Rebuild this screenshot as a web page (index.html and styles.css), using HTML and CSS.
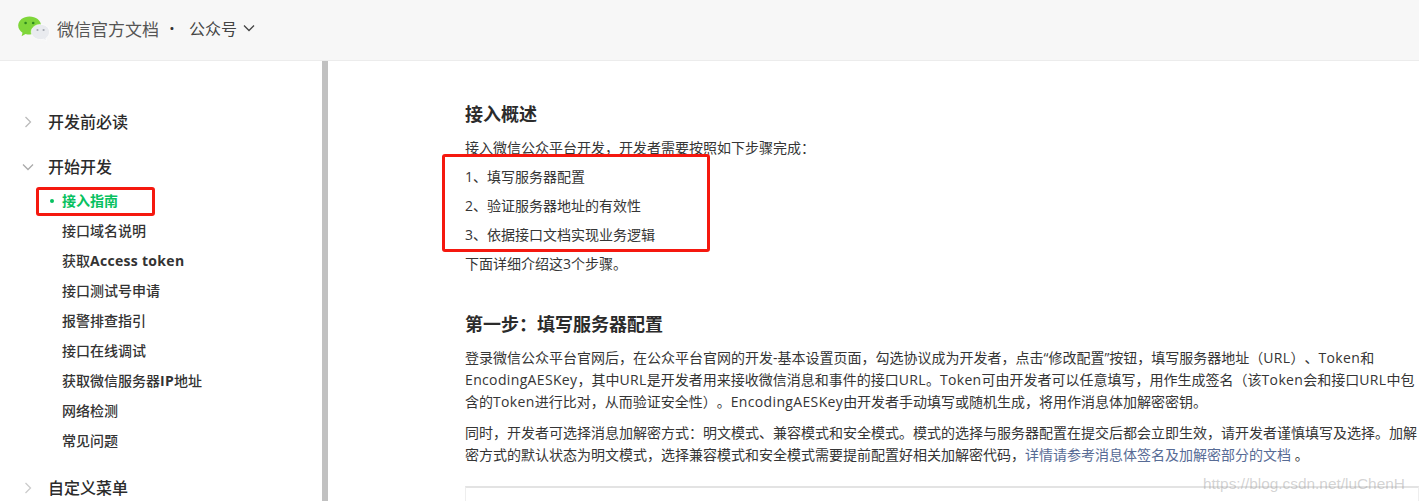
FILE: index.html
```
<!DOCTYPE html>
<html lang="zh-CN">
<head>
<meta charset="utf-8">
<title>微信官方文档</title>
<link rel="stylesheet" href="styles.css">
</head>
<body>
<header class="topbar">
  <svg class="logo" viewBox="0 0 32 26" width="32" height="26" aria-hidden="true">
    <path d="M11.500 0.500C5.200 0.500 0.200 4.400 0.200 9.600c0 3 1.700 5.500 4.300 7.200l-0.900 3.400 3.900-2.200c1.300 0.400 2.600 0.600 4 0.600 6.300 0 11.600-4 11.600-9C23.100 4.400 17.800 0.500 11.500 0.500z" fill="#7fd63a"/>
    <circle cx="7.600" cy="7" r="1.300" fill="#2f8a1f"/>
    <circle cx="15.200" cy="7" r="1.300" fill="#2f8a1f"/>
    <path d="M22.600 8.400c-5.100 0-9.400 3.300-9.400 7.600 0 4.200 4.300 7.600 9.400 7.600 1 0 2-0.100 2.900-0.400l3 1.700-0.700-2.500c2.200-1.400 3.700-3.800 3.700-6.400 0-4.300-3.800-7.600-8.900-7.600z" fill="#e9ebef" stroke="#fff" stroke-width="0.600"/>
    <circle cx="19.500" cy="14" r="1.100" fill="#a3a8b0"/>
    <circle cx="25.600" cy="14" r="1.100" fill="#a3a8b0"/>
  </svg>
  <span class="brand">微信官方文档</span>
  <span class="sep">·</span>
  <span class="product">公众号</span>
  <svg class="caret" viewBox="0 0 12 8" width="12" height="8" aria-hidden="true"><path d="M1 1.500l5 5 5-5" fill="none" stroke="#444" stroke-width="1.300"/></svg>
</header>
<div class="layout">
  <nav class="sidebar">
    <div class="group">
      <div class="group-title"><svg class="chev" viewBox="0 0 8 12" width="8" height="12" aria-hidden="true"><path d="M1.500 1l5 5-5 5" fill="none" stroke="#bbb" stroke-width="1.300"/></svg>开发前必读</div>
    </div>
    <div class="group open">
      <div class="group-title"><svg class="chev down" viewBox="0 0 12 8" width="12" height="8" aria-hidden="true"><path d="M1 1.500l5 5 5-5" fill="none" stroke="#aaa" stroke-width="1.300"/></svg>开始开发</div>
      <ul class="items">
        <li class="active">接入指南</li>
        <li>接口域名说明</li>
        <li>获取<span class="en">Access token</span></li>
        <li>接口测试号申请</li>
        <li>报警排查指引</li>
        <li>接口在线调试</li>
        <li>获取微信服务器<span class="en">IP</span>地址</li>
        <li>网络检测</li>
        <li>常见问题</li>
      </ul>
    </div>
    <div class="group">
      <div class="group-title"><svg class="chev" viewBox="0 0 8 12" width="8" height="12" aria-hidden="true"><path d="M1.500 1l5 5-5 5" fill="none" stroke="#ccc" stroke-width="1.300"/></svg>自定义菜单</div>
    </div>
  </nav>
  <div class="scrollbar"></div>
  <main class="content">
    <h2 class="first">接入概述</h2>
    <p>接入微信公众平台开发，开发者需要按照如下步骤完成：</p>
    <p>1、填写服务器配置</p>
    <p>2、验证服务器地址的有效性</p>
    <p>3、依据接口文档实现业务逻辑</p>
    <p>下面详细介绍这3个步骤。</p>
    <h2 class="step">第一步：填写服务器配置</h2>
    <p class="body">登录微信公众平台官网后，在公众平台官网的开发-基本设置页面，勾选协议成为开发者，点击“修改配置”按钮，填写服务器地址（<span class="en">URL</span>）、<span class="en">Token</span>和<span class="en">EncodingAESKey</span>，其中<span class="en">URL</span>是开发者用来接收微信消息和事件的接口<span class="en">URL</span>。<span class="en">Token</span>可由开发者可以任意填写，用作生成签名（该<span class="en">Token</span>会和接口<span class="en">URL</span>中包含的<span class="en">Token</span>进行比对，从而验证安全性）。<span class="en">EncodingAESKey</span>由开发者手动填写或随机生成，将用作消息体加解密密钥。</p>
    <p class="body">同时，开发者可选择消息加解密方式：明文模式、兼容模式和安全模式。模式的选择与服务器配置在提交后都会立即生效，请开发者谨慎填写及选择。加解密方式的默认状态为明文模式，选择兼容模式和安全模式需要提前配置好相关加解密代码，<a href="#">详情请参考消息体签名及加解密部分的文档</a> 。</p>
    <div class="shot"></div>
  </main>
</div>
<div class="mark mark-nav"></div>
<div class="mark mark-list"></div>
<div class="watermark">https://blog.csdn.net/luChenH</div>
</body>
</html>
```
FILE: styles.css
```
* { box-sizing: border-box; }
html, body { height: 100%; }
body {
  margin: 0;
  overflow: hidden;
  background: #fff;
  color: #353535;
  font-family: "Open Sans", "Noto Sans CJK SC", sans-serif;
  text-spacing-trim: space-all;
  position: relative;
}
.en { letter-spacing: 0.35px; }
.topbar {
  height: 61px;
  display: flex;
  align-items: center;
  padding-left: 18px;
  padding-bottom: 4px;
  background: #f7f7f7;
  border-bottom: 1px solid #ececec;
}
.logo { margin-top: 2px; margin-right: 7px; }
.brand { font-size: 17px; color: #555; width: 103px; white-space: nowrap; }
.sep { font-size: 17px; font-weight: 700; width: 24px; text-align: center; color: #333; margin-right: 5px; }
.product { font-size: 16px; color: #444; }
.caret { margin-left: 6px; }
.layout { display: flex; height: 440px; }
.sidebar {
  width: 322px;
  flex: none;
  padding-top: 46px;
}
.scrollbar { width: 6px; flex: none; background: #c1c1c1; }
.group { margin-bottom: 15px; }
.group.open { margin-bottom: 17px; }
.group-title {
  position: relative;
  height: 30px;
  line-height: 30px;
  padding-left: 48px;
  font-size: 16px;
  font-weight: 500;
  color: #2b2b2b;
}
.chev { position: absolute; left: 24px; top: 9px; }
.chev.down { left: 22px; top: 11px; }
.items { list-style: none; margin: 4px 0 0; padding: 0; }
.items li {
  position: relative;
  height: 30px;
  line-height: 30px;
  padding-left: 62px;
  font-size: 14px;
  font-weight: 500;
  color: #333;
}
.items .en { font-weight: 700; letter-spacing: 0.3px; }
.items li.active { color: #07c160; font-weight: 700; }
.items li.active::before {
  content: "";
  position: absolute;
  left: 50px;
  top: 13px;
  width: 4px;
  height: 4px;
  border-radius: 50%;
  background: #07c160;
}
.content {
  flex: 1;
  min-width: 0;
  padding-left: 137px;
}
h2 {
  margin: 0;
  font-size: 18px;
  line-height: 26px;
  font-weight: 700;
  color: #2b2b2b;
}
h2.first { margin-top: 40px; margin-bottom: 10px; }
h2.step { margin-top: 36px; margin-bottom: 10px; }
p {
  margin: 0 0 7px;
  font-size: 14px;
  line-height: 22px;
  color: #353535;
}
p.body { margin-bottom: 9px; }
a { color: #576b95; text-decoration: none; }
.shot {
  margin-top: 20px;
  height: 60px;
  border: 1px solid #eee;
  border-top: 2px solid #e3e3e3;
}
.mark {
  position: absolute;
  border: 3px solid #f5180f;
  border-radius: 3px;
}
.mark-nav { left: 36px; top: 187px; width: 119px; height: 29px; }
.mark-list { left: 442px; top: 154px; width: 268px; height: 98px; }
.watermark {
  position: absolute;
  left: 1203px;
  top: 472px;
  font-family: "Liberation Sans", sans-serif;
  font-size: 15.4px;
  line-height: 24px;
  color: rgba(150, 150, 150, 0.42);
  white-space: nowrap;
}
```
